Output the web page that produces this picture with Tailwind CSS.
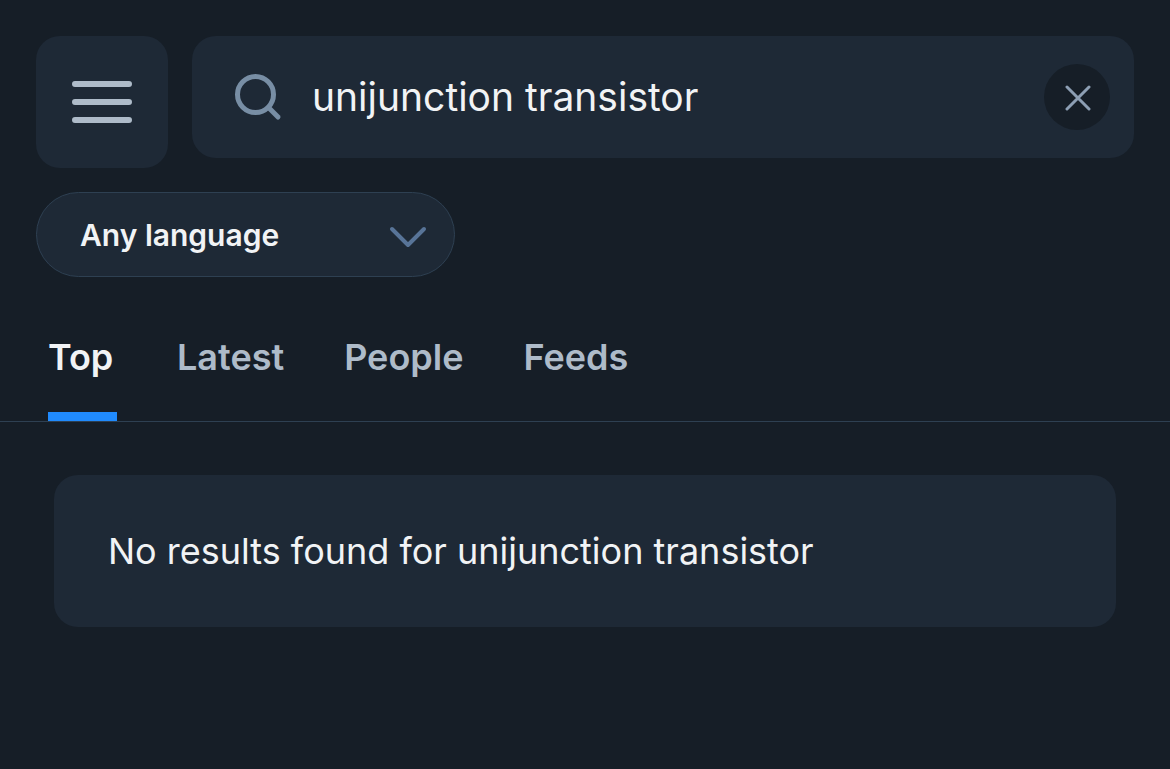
<!DOCTYPE html>
<html lang="en">
    <head>
        <meta charset="utf-8">
        <title>Search</title>
        <meta name="viewport" content="width=device-width, initial-scale=1">
        <script src="https://cdn.jsdelivr.net/npm/@tailwindcss/browser@4"></script>
    </head>
    <body class="bg-[#161e27] text-[#f1f3f5] min-h-screen font-['Inter',sans-serif]">

        <!-- Search header -->
        <header class="flex items-start gap-6 px-9 pt-9">
            <button type="button" aria-label="Open menu" class="size-[132px] shrink-0 flex items-center justify-center rounded-3xl bg-[#1e2936]">
                <svg class="w-[60px] h-[42px]" viewBox="0 0 60 42" fill="none" stroke="#aebbc9" stroke-width="6" stroke-linecap="round">
                    <path d="M3 3h54M3 21h54M3 39h54"/>
                </svg>
            </button>
            <form role="search" class="flex-1 h-[122px] flex items-center rounded-3xl bg-[#1e2936] pl-10 pr-6">
                <svg class="size-[52px] shrink-0" viewBox="0 0 52 52" fill="none" stroke="#788ea5" stroke-width="5" stroke-linecap="round">
                    <circle cx="23.5" cy="23.5" r="18"/>
                    <path d="M36.5 36.5l9.5 9.5"/>
                </svg>
                <input type="text" aria-label="Search" value="unijunction transistor" class="flex-1 min-w-0 ml-7 text-[39px] outline-none">
                <button type="button" aria-label="Clear search" class="size-[66px] shrink-0 flex items-center justify-center rounded-full bg-[#161e27]">
                    <svg class="size-7" viewBox="0 0 28 28" fill="none" stroke="#8d9fb4" stroke-width="3" stroke-linecap="round">
                        <path d="M4 4l22 22M26 4L4 26"/>
                    </svg>
                </button>
            </form>
        </header>

        <!-- Language filter -->
        <div class="relative w-[419px] ml-9 mt-6">
            <select aria-label="Language" class="appearance-none w-full h-[85px] pl-[43px] pt-px rounded-full border border-[#2e4052] bg-[#1e2936] text-3xl font-semibold">
                <option>Any language</option>
            </select>
            <svg class="absolute right-7 top-8 w-[38px] h-6 pointer-events-none" viewBox="0 0 38 24" fill="none" stroke="#587498" stroke-width="4" stroke-linecap="round" stroke-linejoin="round">
                <path d="M3 5l16 16L35 5"/>
            </svg>
        </div>

        <!-- Tabs -->
        <nav class="flex gap-15 h-[145px] pl-12 items-stretch border-b border-[#2e4052] text-4xl font-semibold text-[#aebbc9]">
            <a href="#" aria-current="page" class="min-w-[69px] pt-[60px] border-b-[9px] border-[#208bfe] text-[#f1f3f5]">Top</a>
            <a href="#" class="min-w-[69px] pt-[60px]">Latest</a>
            <a href="#" class="min-w-[69px] pt-[60px]">People</a>
            <a href="#" class="min-w-[69px] pt-[60px]">Feeds</a>
        </nav>

        <main class="px-[54px] pt-[53px]">
            <div class="rounded-3xl bg-[#1e2936] p-[54px]">
                <p class="text-4xl leading-[44px]">No results found for unijunction transistor</p>
            </div>
        </main>

    </body>
</html>
